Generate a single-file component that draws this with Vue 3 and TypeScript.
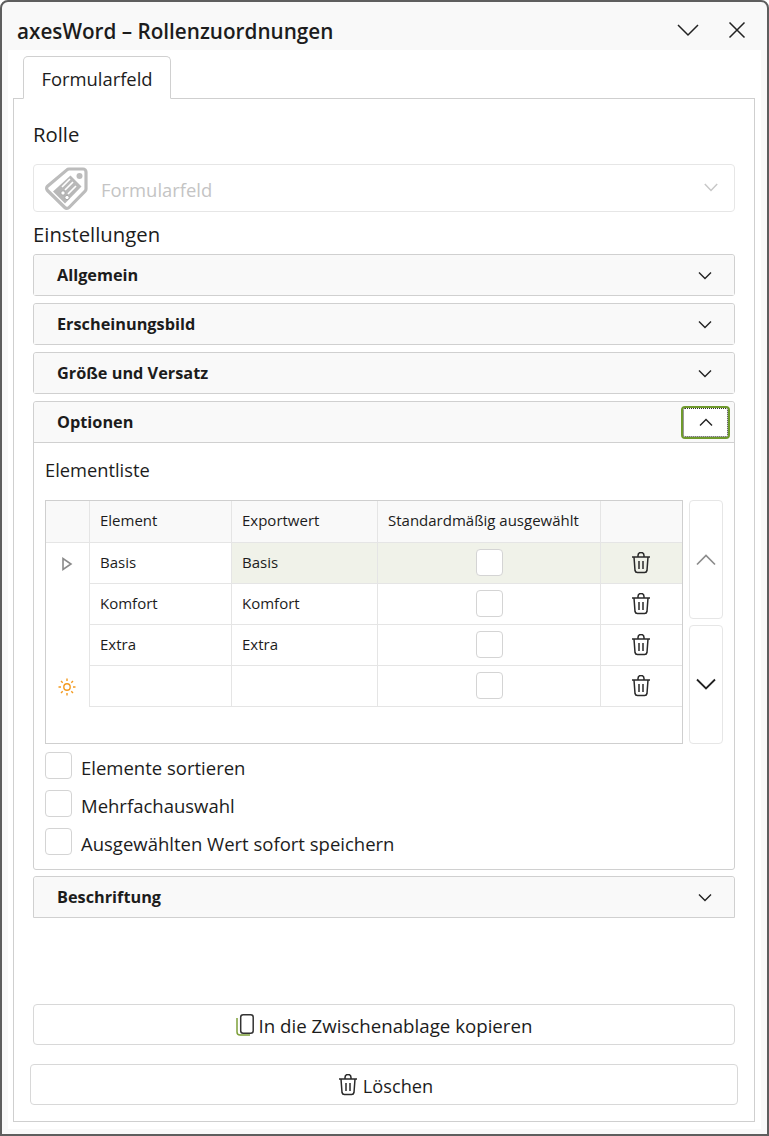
<script setup lang="ts">
  type Row = { name: string; value: string };

  const rows: Row[] = [
    { name: "Basis", value: "Basis" },
    { name: "Komfort", value: "Komfort" },
    { name: "Extra", value: "Extra" },
    { name: "", value: "" },
  ];
  const options = ["Elemente sortieren", "Mehrfachauswahl", "Ausgewählten Wert sofort speichern"];
  const sectionsBefore = ["Allgemein", "Erscheinungsbild", "Größe und Versatz"];
</script>

<template>
  <div class="window">
    <header class="titlebar">
      <span class="title">axesWord – Rollenzuordnungen</span>
      <div class="window-buttons">
        <svg width="24" height="16" viewBox="0 0 24 16"><path d="M2 3l10 10L22 3" class="line" /></svg>
        <svg width="18" height="18" viewBox="0 0 18 18"><path d="M1.500 1.500l15 15M16.500 1.500l-15 15" class="line" /></svg>
      </div>
    </header>

    <div class="body">
      <div class="tabs"><div class="tab">Formularfeld</div></div>
      <main class="panel">
        <div class="heading role-heading">Rolle</div>
        <div class="select">
          <svg class="tag" width="44" height="44" viewBox="0 0 44 44">
            <path d="M25 3h14a3 3 0 0 1 3 3v17a3 3 0 0 1-.9 2.100L25 41.500a3 3 0 0 1-4.200 0L3.500 24.500a3 3 0 0 1 0-4.300L22.900 3.900A3 3 0 0 1 25 3z" fill="none" stroke="#bcbcbc" stroke-width="3.200" />
            <path d="M26.500 9.500l11 11L21 37.500 9 25.500z" fill="#b8b8b8" />
            <circle cx="35.500" cy="10" r="3" fill="#bcbcbc" />
            <path d="M18 21l8-8M21 24l8-8M24 28l8-8" stroke="#fff" stroke-width="1.700" />
            <circle cx="19" cy="27" r="2.200" fill="#fff" stroke="#a8a8a8" stroke-width="1" />
            <circle cx="23" cy="31.500" r="2.200" fill="#fff" stroke="#a8a8a8" stroke-width="1" />
          </svg>
          <span class="select-text">Formularfeld</span>
          <svg class="select-arrow" width="14" height="9" viewBox="0 0 14 9"><path d="M.8 1L7 7.500 13.200 1" fill="none" stroke="#c8c8c8" stroke-width="1.500" /></svg>
        </div>
        <div class="heading settings-heading">Einstellungen</div>

        <section v-for="s in sectionsBefore" :key="s" class="section">
          <div class="section-head">
            <b>{{ s }}</b>
            <svg class="chev" width="14" height="9" viewBox="0 0 14 9"><path d="M1 1.500l6 6 6-6" class="thin" /></svg>
          </div>
        </section>

        <section class="section open">
          <div class="section-head">
            <b>Optionen</b>
            <button class="focus-btn">
              <svg width="14" height="9" viewBox="0 0 14 9"><path d="M1 7.500l6-6 6 6" class="thin" /></svg>
            </button>
          </div>
          <div class="section-body">
            <div class="list-label">Elementliste</div>
            <div class="list-wrap">
              <div class="grid">
                <div class="cell head marker"></div>
                <div class="cell head">Element</div>
                <div class="cell head">Exportwert</div>
                <div class="cell head">Standardmäßig ausgewählt</div>
                <div class="cell head last"></div>
                <template v-for="(r, i) in rows" :key="i">
                  <div class="marker-cell">
                    <svg v-if="i === 0" width="12" height="16" viewBox="0 0 12 16"><path d="M2 2.500v11L10 8z" fill="none" stroke="#8a8a8a" stroke-width="1.600" /></svg>
                    <svg v-if="i === 3" width="20" height="20" viewBox="0 0 20 20">
                      <circle cx="10" cy="10" r="3.200" fill="none" stroke="#f39a1f" stroke-width="1.400" />
                      <path d="M10 1.500v2.500M10 16v2.500M1.500 10H4M16 10h2.500M4 4l1.700 1.700M14.300 14.300L16 16M16 4l-1.700 1.700M5.700 14.300L4 16" stroke="#f39a1f" stroke-width="1.400" />
                    </svg>
                  </div>
                  <div class="cell">{{ r.name }}</div>
                  <div class="cell" :class="{ sel: i === 0 }">{{ r.value }}</div>
                  <div class="cell center" :class="{ sel: i === 0 }"><span class="box raised"></span></div>
                  <div class="cell center last" :class="{ sel: i === 0 }">
                    <svg width="20" height="22" viewBox="0 0 20 22" class="trash">
                      <path d="M1 5h18M7 5V3.500a3 3 0 0 1 6 0V5M3 5l1 13.500a2.500 2.500 0 0 0 2.500 2h7a2.500 2.500 0 0 0 2.500-2L17 5M8 9v8M12 9v8" />
                    </svg>
                  </div>
                </template>
              </div>
              <div class="order-buttons">
                <button class="order">
                  <svg width="20" height="12" viewBox="0 0 20 12"><path d="M1 10.500l9-9 9 9" fill="none" stroke="#8c8c8c" stroke-width="1.700" /></svg>
                </button>
                <button class="order">
                  <svg class="down" width="20" height="12" viewBox="0 0 20 12"><path d="M1 1.500l9 9 9-9" fill="none" stroke="#222" stroke-width="1.800" /></svg>
                </button>
              </div>
            </div>
            <label v-for="o in options" :key="o" class="option">
              <span class="box"></span>
              <span class="option-text">{{ o }}</span>
            </label>
          </div>
        </section>

        <section class="section clipped">
          <div class="section-head">
            <b>Beschriftung</b>
            <svg class="chev" width="14" height="9" viewBox="0 0 14 9"><path d="M1 1.500l6 6 6-6" class="thin" /></svg>
          </div>
        </section>

        <div class="spacer"></div>

        <button class="action copy">
          <svg width="18" height="22" viewBox="0 0 18 22">
            <path d="M1 4v14a3 3 0 0 0 3 3h10" fill="none" stroke="#7ea03a" stroke-width="1.500" />
            <rect x="4.700" y=".8" width="12.500" height="18.500" rx="2.500" fill="none" stroke="#333" stroke-width="1.500" />
          </svg>
          <span class="action-text">In die Zwischenablage kopieren</span>
        </button>
        <button class="action delete">
          <svg width="20" height="22" viewBox="0 0 20 22" class="trash">
            <path d="M1 5h18M7 5V3.500a3 3 0 0 1 6 0V5M3 5l1 13.500a2.500 2.500 0 0 0 2.500 2h7a2.500 2.500 0 0 0 2.500-2L17 5M8 9v8M12 9v8" />
          </svg>
          <span class="action-text">Löschen</span>
        </button>
      </main>
    </div>
  </div>
</template>

<style>
  body {
    margin: 0;
    background: #fff;
  }
</style>

<style scoped>
  .window {
    box-sizing: border-box;
    width: 769px;
    height: 1136px;
    border: 2px solid #5e5e5e;
    border-radius: 8px 8px 0 0;
    background: #f9f9f9;
    font-family: "Open Sans", "Noto Sans", sans-serif;
    color: #1c1c1c;
    display: flex;
    flex-direction: column;
    overflow: hidden;
  }
  .titlebar {
    box-sizing: border-box;
    height: 48px;
    flex: none;
    display: flex;
    align-items: center;
    justify-content: space-between;
    padding: 8px 21px 0 15px;
  }
  .title {
    font-size: 20.700px;
    font-weight: 600;
    margin-top: 2px;
  }
  .window-buttons {
    display: flex;
    align-items: center;
    gap: 28px;
  }
  .line {
    fill: none;
    stroke: #222;
    stroke-width: 1.500;
  }
  .thin {
    fill: none;
    stroke: #222;
    stroke-width: 1.400;
  }
  .body {
    margin: 0 6px 5px;
    background: #fff;
    flex: 1;
    display: flex;
    flex-direction: column;
    padding: 6px 6px 7px 5px;
    min-height: 0;
  }
  .tabs {
    height: 42px;
    flex: none;
    padding-left: 10px;
    position: relative;
    z-index: 1;
  }
  .tab {
    box-sizing: border-box;
    width: 148px;
    height: 43px;
    border: 1px solid #d0d0d0;
    border-bottom-color: #fff;
    border-radius: 5px 5px 0 0;
    background: #fff;
    text-align: center;
    line-height: 44px;
    font-size: 18.400px;
  }
  .panel {
    flex: 1;
    box-sizing: border-box;
    border: 1px solid #cfcfcf;
    padding: 0 19px 16px 19px;
    display: flex;
    flex-direction: column;
    min-height: 0;
  }
  .heading {
    font-size: 20.300px;
    line-height: 26px;
  }
  .role-heading {
    margin-top: 22px;
    margin-bottom: 17px;
  }
  .settings-heading {
    margin-top: 9px;
    margin-bottom: 7px;
  }
  .select {
    box-sizing: border-box;
    height: 48px;
    border: 1px solid #e6e6e6;
    border-radius: 4px;
    display: flex;
    align-items: center;
    padding: 0 16px 0 10px;
    flex: none;
  }
  .tag {
    flex: none;
  }
  .select-text {
    flex: 1;
    margin-left: 13px;
    margin-top: 2px;
    color: #c4c4c4;
    font-size: 18.400px;
  }
  .select-arrow {
    margin-bottom: 2px;
  }
  .section {
    box-sizing: border-box;
    border: 1px solid #d0d0d0;
    border-radius: 3px;
    margin-bottom: 7px;
    flex: none;
  }
  .section.open {
    margin-bottom: 6px;
  }
  .section-head {
    box-sizing: border-box;
    height: 40px;
    background: #f9f9f9;
    display: flex;
    align-items: center;
    justify-content: space-between;
    padding: 0 22px 0 23px;
    font-size: 16.300px;
    border-radius: 3px 3px 0 0;
  }
  .section-head b {
    font-weight: 700;
  }
  .open .section-head {
    padding-right: 4px;
    border-bottom: 1px solid #d0d0d0;
    height: 41px;
  }
  .clipped {
    border-radius: 3px 3px 0 0;
    margin-bottom: 0;
  }
  .focus-btn {
    width: 49px;
    height: 33px;
    box-sizing: border-box;
    border: 2px solid #6f9a2c;
    outline: 1px dotted #333;
    outline-offset: -3px;
    border-radius: 4px;
    background: #fff;
    display: flex;
    align-items: center;
    justify-content: center;
    padding: 0;
  }
  .section-body {
    padding: 0 11px 14px 11px;
  }
  .list-label {
    font-size: 18.300px;
    line-height: 24px;
    margin-top: 15px;
    margin-bottom: 18px;
  }
  .list-wrap {
    display: flex;
    gap: 6px;
    margin-bottom: 8px;
  }
  .grid {
    box-sizing: border-box;
    width: 638px;
    height: 244px;
    border: 1px solid #cfcfcf;
    display: grid;
    grid-template-columns: 44px 142px 146px 223px 81px;
    grid-template-rows: 42px repeat(4, 41px);
    align-content: start;
  }
  .cell {
    box-sizing: border-box;
    border-right: 1px solid #e5e5e5;
    border-bottom: 1px solid #e5e5e5;
    border-left: 0;
    padding: 0 0 2px 10px;
    display: flex;
    align-items: center;
    font-size: 15px;
  }
  .cell.head {
    background: #f9f9f9;
    padding-bottom: 3px;
  }
  .cell.last {
    border-right: 0;
    padding-right: 2px;
  }
  .cell.center {
    padding-left: 0;
    padding-bottom: 0;
    justify-content: center;
  }
  .cell.sel {
    background: #f0f2e9;
  }
  .marker-cell {
    border-right: 1px solid #e5e5e5;
    display: flex;
    align-items: center;
    justify-content: center;
    padding-right: 1px;
  }
  .box {
    box-sizing: border-box;
    width: 27px;
    height: 27px;
    flex: none;
    display: block;
    border: 1px solid #d4d4d4;
    border-radius: 4px;
    background: #fff;
  }
  .box.raised {
    margin-bottom: 2px;
  }
  .trash {
    fill: none;
    stroke: #2a2a2a;
    stroke-width: 1.500;
  }
  .order-buttons {
    display: flex;
    flex-direction: column;
    gap: 6px;
  }
  .order {
    width: 34px;
    height: 119px;
    box-sizing: border-box;
    border: 1px solid #e6e6e6;
    border-radius: 4px;
    background: #fff;
    padding: 0;
    display: flex;
    align-items: center;
    justify-content: center;
  }
  .order .down {
    margin-bottom: 2px;
  }
  .option {
    display: flex;
    align-items: center;
    gap: 9px;
    height: 27px;
    margin-bottom: 11px;
    font-size: 18.500px;
  }
  .option-text {
    margin-top: 4px;
  }
  .option:last-child {
    margin-bottom: 0;
  }
  .spacer {
    flex: 1;
  }
  .action {
    box-sizing: border-box;
    border: 1px solid #d8d8d8;
    border-radius: 4px;
    background: #fff;
    height: 41px;
    font-family: inherit;
    font-size: 18.200px;
    color: #1c1c1c;
    display: flex;
    align-items: center;
    justify-content: center;
    gap: 5px;
    flex: none;
    padding: 0;
  }
  .action-text {
    margin-top: 2px;
  }
  .copy {
    margin-bottom: 19px;
    font-size: 18.700px;
  }
  .delete {
    margin: 0 -3px;
    padding-left: 3px;
  }
</style>
